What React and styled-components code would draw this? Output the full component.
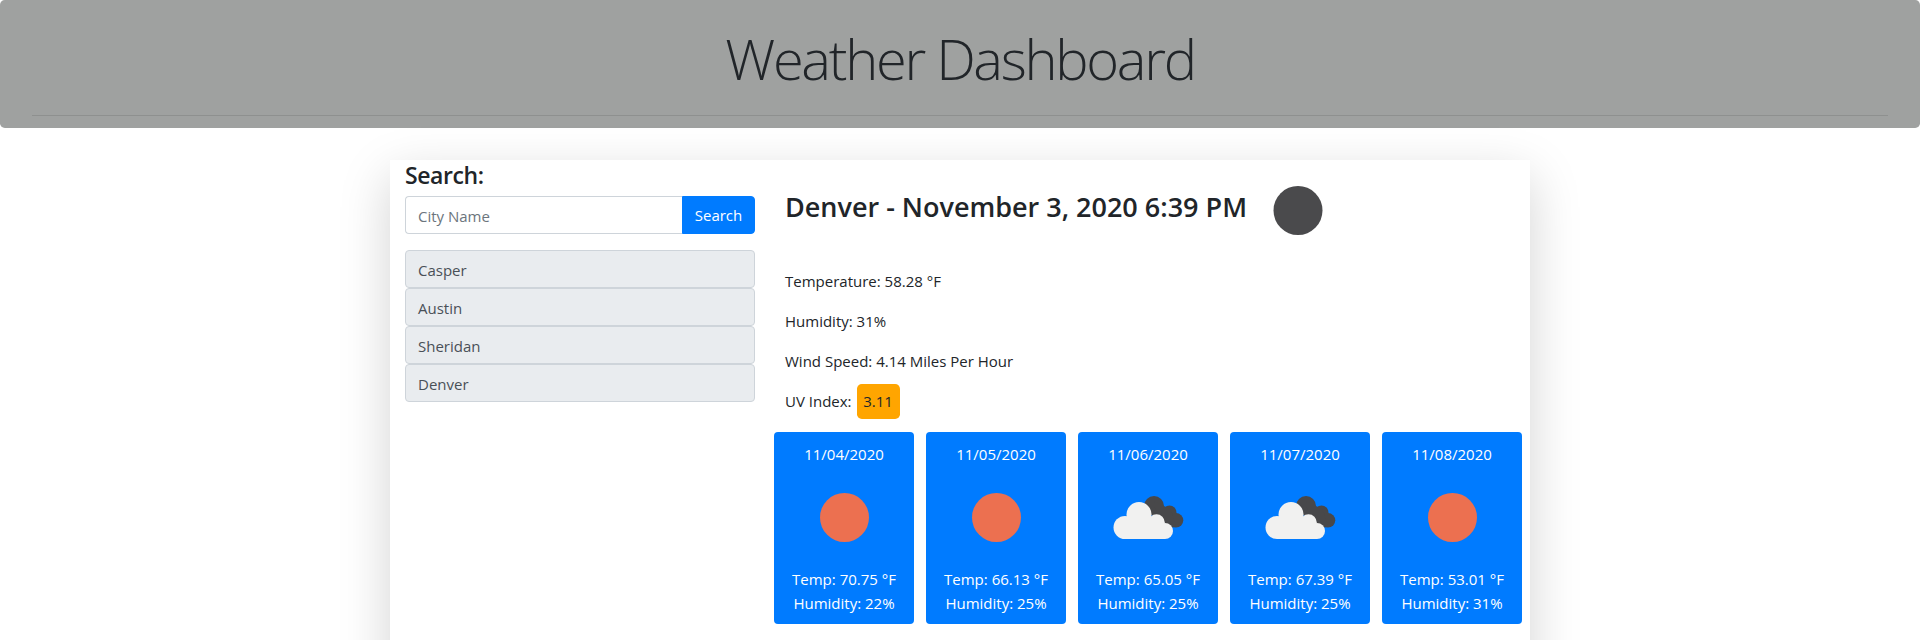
import React from "react";
import styled, { createGlobalStyle } from "styled-components";

const Global = createGlobalStyle`
  html, body { margin: 0; padding: 0; background: #fff; overflow: hidden; }
  body { font-family: "Open Sans", "Noto Sans", "Liberation Sans", sans-serif; font-size: 15px; line-height: 24px; color: #212529; }
  * { box-sizing: border-box; }
`;
const Page = styled.div`display: flex; flex-direction: column; height: 640px; overflow: hidden;`;
const Jumbotron = styled.header`
  background: #9fa1a0; height: 128px; padding: 25px 32px 0; border-radius: 4.8px; margin-bottom: 32px; flex: none;
`;
const Title = styled.h1`
  margin: 0 0 23px; font-size: 56px; line-height: 67.2px; font-weight: 300; letter-spacing: -2.3px; text-align: center; color: #212529;
`;
const Rule = styled.hr`margin: 0; border: 0; border-top: 1px solid rgba(0,0,0,.1);`;
const Container = styled.main`
  width: 1140px; margin: 0 auto; flex: none; height: 560px; background: #fff;
  box-shadow: 0 16px 48px rgba(0,0,0,.175); display: grid; grid-template-columns: 380px 760px;
`;
const Side = styled.aside`padding: 0 15px;`;
const SearchTitle = styled.h4`margin: 0 0 7px; font-size: 23px; line-height: 31px; height: 29px; font-weight: 600; letter-spacing: -0.4px;`;
const InputGroup = styled.form`display: flex; height: 38px; margin-bottom: 16px;`;
const Input = styled.input`
  flex: 1; min-width: 0; height: 38px; padding: 7px 12px 5px; font: inherit; color: #495057; border: 1px solid #ced4da; border-right: 0;
  border-radius: 4px 0 0 4px; background: #fff;
  &::placeholder { color: #6c757d; opacity: 1; }
`;
const Button = styled.button`
  width: 73px; height: 38px; padding: 0; font: inherit; color: #fff; background: #007bff; border: 1px solid #007bff; border-radius: 0 4px 4px 0;
`;
const History = styled.ul`list-style: none; margin: 0; padding: 0;`;
const HistoryItem = styled.li`
  height: 38px; padding: 7px 12px 5px; line-height: 24px; color: #495057; background: #e9ecef; border: 1px solid #ced4da; border-radius: 4px;
`;
const Content = styled.section`display: flex; flex-direction: column;`;
const Today = styled.div`padding-left: 15px;`;
const Heading = styled.div`display: flex; align-items: center; height: 100px; margin-bottom: 9px;`;
const City = styled.h2`
  margin: 0 0 6px; width: 462.5px; font-size: 27px; line-height: 34px; font-weight: 600; letter-spacing: 0; white-space: nowrap;
`;
const Stat = styled.p`margin: 0 0 16px; line-height: 24px; display: flex; align-items: center; height: 24px;`;
const Uv = styled.span`
  background: orange; border-radius: 4.8px; width: 43px; height: 35px; margin-left: 5px; flex: none;
  display: flex; align-items: center; justify-content: center;
`;
const Forecast = styled.div`display: flex; gap: 12px; padding-left: 4px; margin-top: 3px;`;
const Card = styled.article`
  width: 140px; height: 192px; background: #007bff; color: #fff; border-radius: 4px; padding: 10px 0 9px; text-align: center;
  display: flex; flex-direction: column; align-items: center;
`;
const CardIcon = styled.svg`display: block; width: 100px; height: 100px; flex: none;`;
const MainIcon = styled.svg`display: block; width: 100px; height: 100px; flex: none;`;
const Line = styled.div`line-height: 24.5px;`;

const Sun = () => (
  <CardIcon viewBox="0 0 100 100"><circle cx="50.5" cy="50.5" r="24.5" fill="#ec7050" /></CardIcon>
);
const Clouds = () => (
  <CardIcon viewBox="0 0 100 100">
    <g fill="#48484a">
      <circle cx="56" cy="39" r="10" />
      <circle cx="71.5" cy="45.5" r="7" />
      <circle cx="78" cy="53.3" r="7.3" />
      <path d="M56 34 L72 42 L78 60 L60 62 Z" />
    </g>
    <g fill="#f1f1f0">
      <circle cx="27" cy="60.5" r="11.5" />
      <circle cx="41" cy="47.5" r="12.5" />
      <circle cx="58.5" cy="55.5" r="8.3" />
      <circle cx="67" cy="64" r="8" />
      <path d="M27 50 H50 L67 58 V72 H27 Z" />
    </g>
  </CardIcon>
);

const days = [
  { d: "11/04/2020", t: "70.75", h: "22%", i: "sun" },
  { d: "11/05/2020", t: "66.13", h: "25%", i: "sun" },
  { d: "11/06/2020", t: "65.05", h: "25%", i: "cloud" },
  { d: "11/07/2020", t: "67.39", h: "25%", i: "cloud" },
  { d: "11/08/2020", t: "53.01", h: "31%", i: "sun" },
];

export default function App() {
  return (
    <Page>
      <Global />
      <Jumbotron>
        <Title>Weather Dashboard</Title>
        <Rule />
      </Jumbotron>
      <Container>
        <Side>
          <SearchTitle>Search:</SearchTitle>
          <InputGroup>
            <Input placeholder="City Name" />
            <Button type="button">Search</Button>
          </InputGroup>
          <History>
            {["Casper", "Austin", "Sheridan", "Denver"].map((c) => <HistoryItem key={c}>{c}</HistoryItem>)}
          </History>
        </Side>
        <Content>
          <Today>
            <Heading>
              <City>Denver - November 3, 2020 6:39 PM</City>
              <MainIcon viewBox="0 0 100 100"><circle cx="50" cy="50.5" r="24.5" fill="#4a4a4c" /></MainIcon>
            </Heading>
            <Stat>Temperature: 58.28 °F</Stat>
            <Stat>Humidity: 31%</Stat>
            <Stat>Wind Speed: 4.14 Miles Per Hour</Stat>
            <Stat>UV Index: <Uv>3.11</Uv></Stat>
          </Today>
          <Forecast>
            {days.map((x) => (
              <Card key={x.d}>
                <Line>{x.d}</Line>
                {x.i === "sun" ? <Sun /> : <Clouds />}
                <Line>Temp: {x.t} °F</Line>
                <Line>Humidity: {x.h}</Line>
              </Card>
            ))}
          </Forecast>
        </Content>
      </Container>
    </Page>
  );
}
